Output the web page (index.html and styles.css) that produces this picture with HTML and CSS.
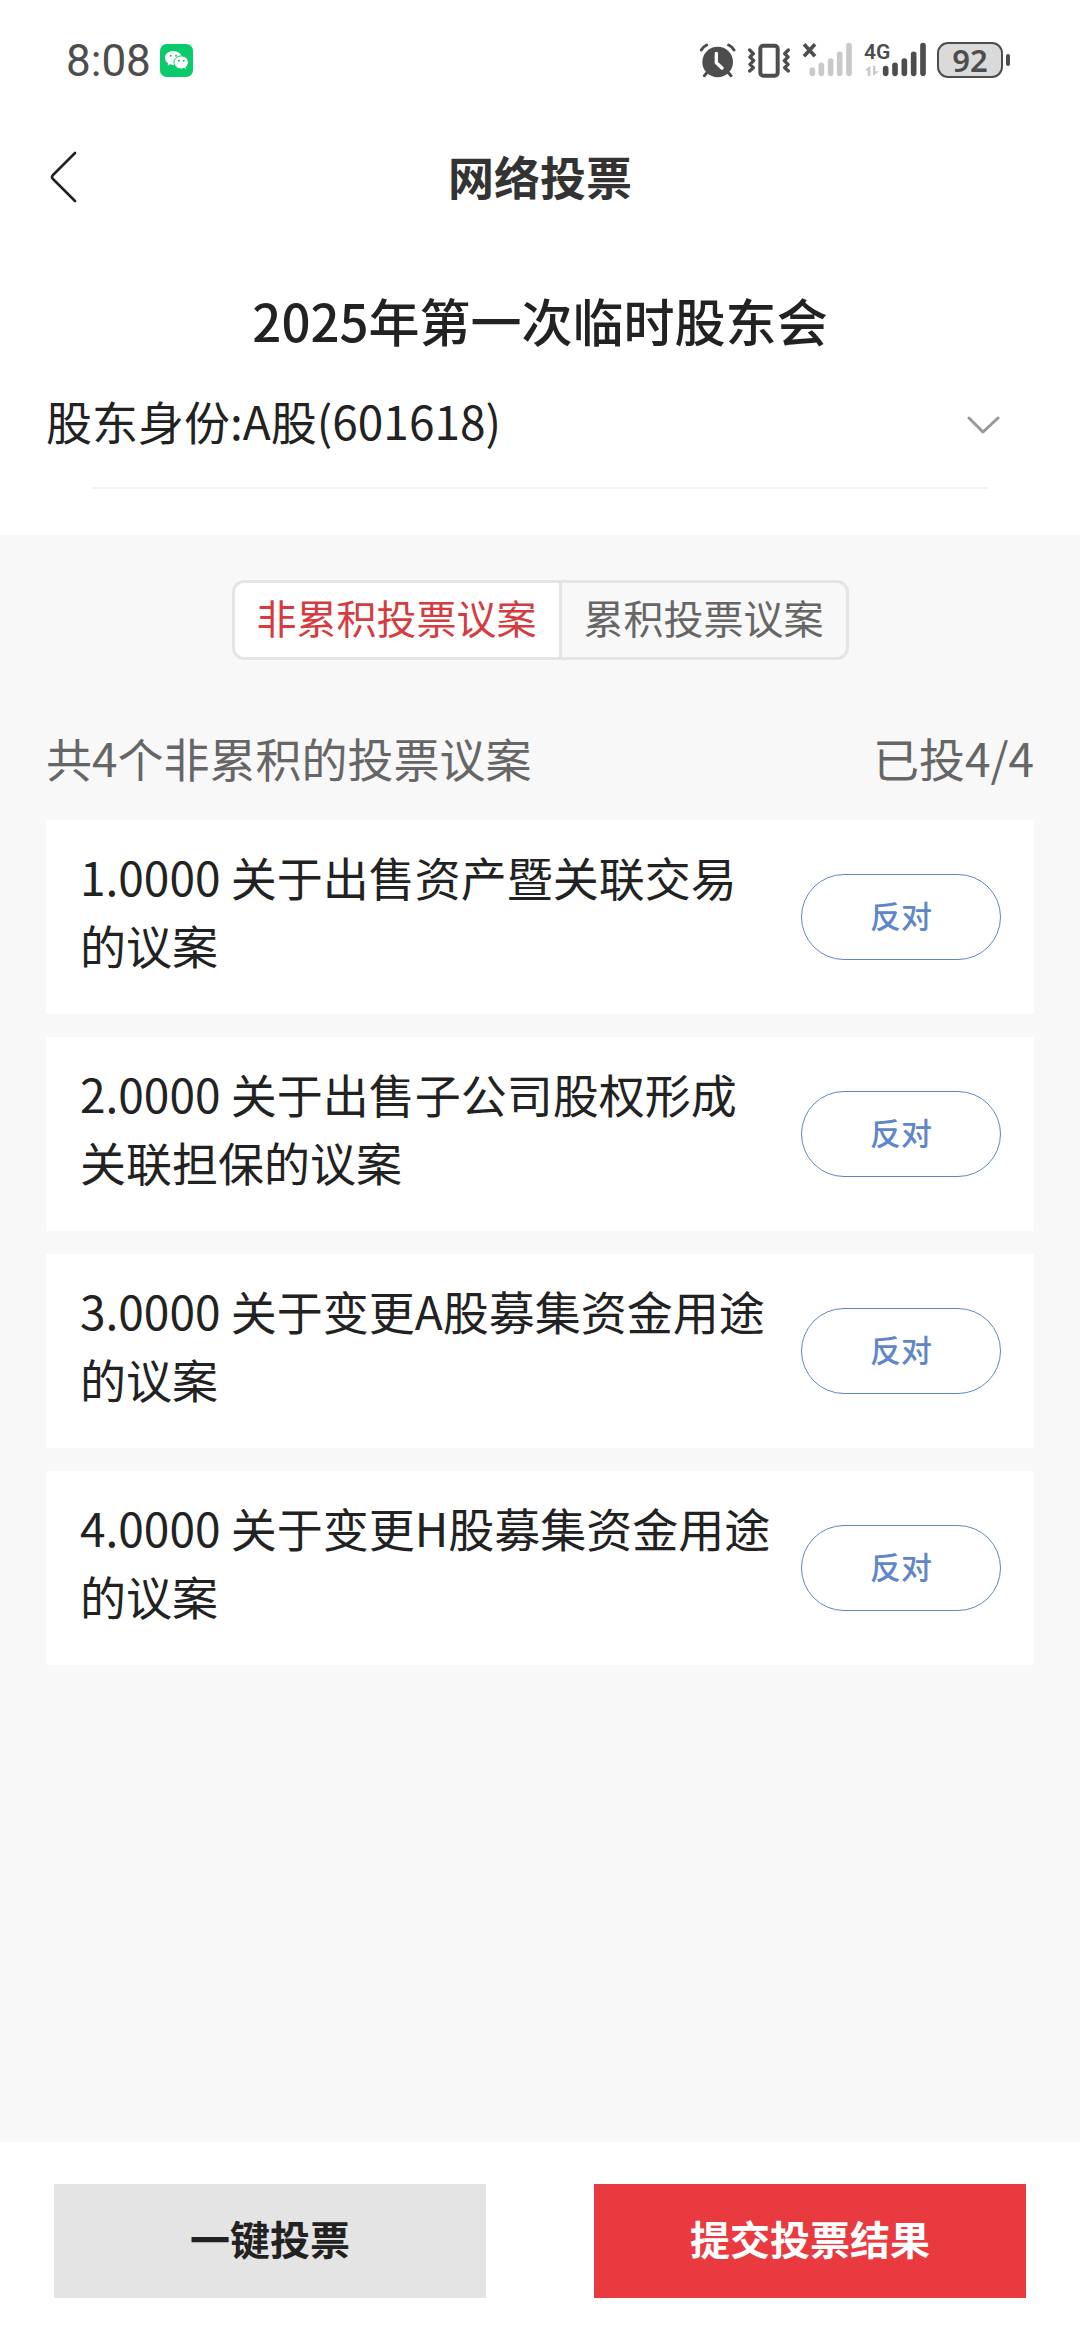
FILE: index.html
```html
<!DOCTYPE html>
<html lang="zh-CN">
<head>
<meta charset="utf-8">
<meta name="viewport" content="width=device-width, initial-scale=1">
<title>网络投票</title>
<link rel="stylesheet" href="styles.css">
</head>
<body>
<div class="status">
  <div class="status-group status-left">
    <span class="clock">8:08</span>
    <svg class="wechat" viewBox="0 0 99 99" width="33" height="33" aria-hidden="true">
      <rect width="99" height="99" rx="20" fill="#0acb6b"/>
      <path fill="#fff" d="M40 21C25 21 15 30 15 42c0 7 4 12 9 16l-1 7 8-4c3 1 6 2 10 2 14 0 25-9 25-21S54 21 40 21Z"/>
      <path fill="#fff" stroke="#0acb6b" stroke-width="3" d="M64 36c-12 0-22 8-22 19s10 20 22 20c3 0 6-1 8-2l7 4-1-7c4-4 7-9 7-15 0-11-9-19-21-19Z"/>
      <g fill="#0acb6b"><circle cx="32" cy="35" r="3"/><circle cx="48" cy="35" r="3"/><circle cx="57" cy="50" r="3"/><circle cx="71" cy="50" r="3"/></g>
    </svg>
  </div>
  <div class="status-group status-right">
    <svg viewBox="52 36 111 108" width="37" height="36" aria-hidden="true">
      <circle cx="108" cy="96" r="46" fill="#4d4d4d"/>
      <path d="M104 70v28l17 16" fill="none" stroke="#fff" stroke-width="10" stroke-linecap="round" stroke-linejoin="round"/>
      <path d="M59 60Q65 50 75 45M141 45Q151 50 157 60M77 127 68 137M139 127l9 10" fill="none" stroke="#4d4d4d" stroke-width="9" stroke-linecap="round"/>
    </svg>
    <svg viewBox="195 36 132 108" width="44" height="36" aria-hidden="true">
      <rect x="235" y="47" width="52" height="90" rx="9" fill="none" stroke="#4d4d4d" stroke-width="12"/>
      <path d="M203 60l11 11-10 10 11 11-11 11 10 10-11 10M319 60l-11 11 10 10-11 11 11 11-10 10 11 10" fill="none" stroke="#4d4d4d" stroke-width="10" stroke-linecap="round" stroke-linejoin="round"/>
    </svg>
    <svg viewBox="360 36 153 108" width="51" height="36" aria-hidden="true">
      <path d="M366 43l33 36M399 43l-33 36" stroke="#4d4d4d" stroke-width="11"/>
      <path d="M391 120v10M418 106v24M446 93v37M473 73v57M501 47v83" stroke="#c9c9c9" stroke-width="17" stroke-linecap="round"/>
    </svg>
    <div class="network">
      <span class="network-type">4G</span>
      <svg viewBox="546 36 186 108" width="62" height="36" aria-hidden="true">
        <path d="M548 121l17-14v31h-8v-17ZM573 107h7v17h11l-18 14Z" fill="#c9c9c9"/>
        <path d="M611 116v14M639 106v24M667 93v37M695 73v57M723 47v83" stroke="#4d4d4d" stroke-width="17" stroke-linecap="round"/>
      </svg>
    </div>
    <div class="battery"><span class="battery-level">92</span></div>
  </div>
</div>

<header class="topbar">
  <button class="back" type="button" aria-label="返回">
    <svg viewBox="0 0 28 52" width="28" height="52" aria-hidden="true">
      <path d="M25 2 3 24q-2 2 0 4l22 22" fill="none" stroke="#222" stroke-width="2.6" stroke-linecap="round"/>
    </svg>
  </button>
  <h1 class="topbar-title">网络投票</h1>
</header>

<section class="meeting">
  <h2 class="meeting-title">2025年第一次临时股东会</h2>
  <div class="identity">
    <label for="identity">股东身份:</label>
    <select id="identity" class="identity-select">
      <option>A股(601618)</option>
    </select>
    <svg viewBox="0 0 33 32" width="33" height="32" aria-hidden="true">
      <path d="M2 14l14 14L31 14" fill="none" stroke="#999" stroke-width="3" stroke-linecap="round" stroke-linejoin="round"/>
    </svg>
  </div>
</section>

<main class="content">
  <div class="tabs" role="tablist">
    <button class="tab tab-active" type="button" role="tab" aria-selected="true">非累积投票议案</button>
    <button class="tab" type="button" role="tab" aria-selected="false">累积投票议案</button>
  </div>
  <div class="summary"><span>共4个非累积的投票议案</span><span>已投4/4</span></div>
  <ul class="proposals">
    <li class="proposal"><p class="proposal-title">1.0000 关于出售资产暨关联交易的议案</p><button class="vote" type="button">反对</button></li>
    <li class="proposal"><p class="proposal-title">2.0000 关于出售子公司股权形成关联担保的议案</p><button class="vote" type="button">反对</button></li>
    <li class="proposal"><p class="proposal-title">3.0000 关于变更A股募集资金用途的议案</p><button class="vote" type="button">反对</button></li>
    <li class="proposal"><p class="proposal-title">4.0000 关于变更H股募集资金用途的议案</p><button class="vote" type="button">反对</button></li>
  </ul>
</main>

<footer class="actions">
  <button class="action" type="button">一键投票</button>
  <button class="action action-primary" type="button">提交投票结果</button>
</footer>
</body>
</html>
```
FILE: styles.css
```css
*, *::before, *::after { box-sizing: border-box; }

body {
  margin: 0;
  min-height: 100vh;
  display: flex;
  flex-direction: column;
  background: #fff;
  color: #222;
  font-family: "Noto Sans CJK SC", sans-serif;
  font-size: 46px;
  line-height: 68px;
}

button, select {
  margin: 0;
  padding: 0;
  border: 0;
  background: none;
  color: inherit;
  font: inherit;
}

h1, h2, p, ul { margin: 0; padding: 0; }
svg { display: block; flex: none; }

.status {
  display: flex;
  align-items: center;
  justify-content: space-between;
  height: 120px;
  padding: 0 70px 0 66px;
  color: #4d4d4d;
}
.status-group { display: flex; align-items: center; }
.status-left { gap: 9px; }
.status-right { gap: 11px; }
.clock { padding-top: 2px; font-family: Roboto, sans-serif; font-size: 44px; }

.network { position: relative; }
.network-type {
  position: absolute;
  left: 0;
  top: 0;
  font-family: Roboto, sans-serif;
  font-size: 21px;
  font-weight: 600;
  line-height: 20px;
}

.battery { display: flex; align-items: center; gap: 3px; }
.battery-level {
  width: 66px;
  height: 36px;
  border: 2px solid #4d4d4d;
  border-radius: 11px;
  background: #dadada;
  font-family: "Noto Sans", sans-serif;
  font-size: 31px;
  font-weight: 600;
  line-height: 32px;
  text-align: center;
}
.battery::after {
  content: "";
  width: 4px;
  height: 12px;
  border-radius: 2px;
  background: #4d4d4d;
}

.topbar {
  display: grid;
  grid-template-columns: 1fr auto 1fr;
  align-items: center;
  height: 114px;
  padding: 0 50px;
}
.back { justify-self: start; cursor: pointer; }
.topbar-title { padding-bottom: 4px; font-size: 46px; font-weight: 700; color: #333; }

.meeting { padding: 52px 46px 46px; }
.meeting-title {
  font-size: 51px;
  font-weight: 500;
  text-align: center;
}
.identity {
  display: flex;
  align-items: center;
  margin-top: 32px;
  padding-right: 34px;
}
.identity-select {
  flex: 1;
  appearance: none;
  outline: none;
}
.meeting::after {
  content: "";
  display: block;
  height: 2px;
  margin: 33px 45px 0;
  background: #f4f4f4;
}

.content {
  flex: 1;
  padding: 45px 46px 0;
  background: #f8f8f8;
}
.tabs {
  display: flex;
  width: fit-content;
  margin: 0 auto;
  overflow: hidden;
  border: 3px solid #e4e4e4;
  border-radius: 12px;
}
.tab {
  height: 74px;
  padding: 0 22px 6px;
  color: #666;
  font-size: 40px;
  cursor: pointer;
}
.tab + .tab { border-left: 3px solid #e4e4e4; }
.tab-active { background: #fff; color: #d43c40; }

.summary {
  display: flex;
  justify-content: space-between;
  margin: 63px 0 29px;
  color: #666;
}

.proposals {
  display: flex;
  flex-direction: column;
  gap: 23px;
  list-style: none;
}
.proposal {
  display: flex;
  align-items: center;
  justify-content: space-between;
  padding: 0 33px 0 34px;
  background: #fff;
}
.proposal-title {
  max-width: 696px;
  padding: 22px 0 36px;
}
.vote {
  flex: none;
  width: 200px;
  height: 86px;
  padding-bottom: 5px;
  border: 1px solid #5f86c0;
  border-radius: 43px;
  color: #5f86c8;
  font-size: 31px;
  font-weight: 500;
  cursor: pointer;
}

.actions {
  display: flex;
  justify-content: space-between;
  padding: 42px 5vw;
}
.action {
  width: 40vw;
  height: 114px;
  padding-bottom: 7px;
  background: #e4e4e4;
  font-size: 40px;
  font-weight: 700;
  cursor: pointer;
}
.action-primary { background: #e93a40; color: #fff; }
```
